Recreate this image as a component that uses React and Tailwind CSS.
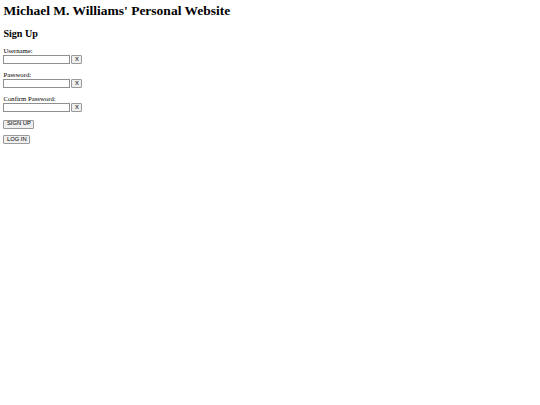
const Field = ({ label, type = 'text' }) => (
  <p className="mb-[7.6px]">
    <span className="block leading-[7.8px]">{label}</span>
    <span className="flex items-center gap-[1px]">
      <input
        type={type}
        className="h-[8.6px] w-[67px] border-[0.6px] border-[#8f8f8f] bg-white outline-none"
      />
      <button className="flex h-[8.6px] w-[11px] items-center justify-center rounded-[1px] border-[0.6px] border-[#9a9a9a] bg-[#efefef] font-['Liberation_Sans',sans-serif] text-[5.8px] leading-none">
        X
      </button>
    </span>
  </p>
)

export default function App() {
  return (
    <div className="min-h-screen bg-white px-[3.4px] pt-[3px] font-['Liberation_Serif',serif] text-[6.75px] text-black">
      <h1 className="mb-[9px] text-[13.5px] font-bold leading-[15.5px]">
        Michael M. Williams' Personal Website
      </h1>
      <h2 className="mb-[8.4px] text-[10.1px] font-bold leading-[11.6px]">Sign Up</h2>
      <Field label="Username:" />
      <Field label="Password:" type="password" />
      <Field label="Confirm Password:" type="password" />
      <div className="flex flex-col items-start gap-[6.6px] pt-[0.5px]">
        <button className="h-[8.6px] rounded-[1px] border-[0.6px] border-[#9a9a9a] bg-[#efefef] px-[2.6px] font-['Liberation_Sans',sans-serif] text-[5.8px] leading-none">
          SIGN UP
        </button>
        <button className="h-[8.6px] rounded-[1px] border-[0.6px] border-[#9a9a9a] bg-[#efefef] px-[2.6px] font-['Liberation_Sans',sans-serif] text-[5.8px] leading-none">
          LOG IN
        </button>
      </div>
    </div>
  )
}
